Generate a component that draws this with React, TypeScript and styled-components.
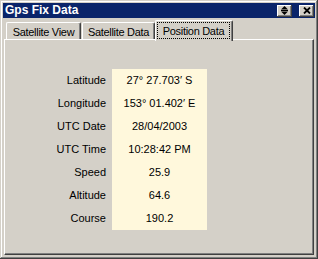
import { Fragment } from "react";
import styled, { createGlobalStyle } from "styled-components";

const GlobalStyle = createGlobalStyle`
  html, body {
    margin: 0;
    padding: 0;
    background: #d4d0c8;
  }
  body {
    font-family: "Liberation Sans", Arial, sans-serif;
    font-size: 11px;
    color: #000;
  }
`;

const Window = styled.div`
  width: 318px;
  height: 259px;
  box-sizing: border-box;
  padding: 3px;

  display: flex;
  flex-direction: column;

  background-color: #d4d0c8;
  box-shadow: inset -1px -1px #404040, inset 1px 1px #d4d0c8,
    inset -2px -2px #808080, inset 2px 2px #ffffff;
`;
const TitleBar = styled.header`
  height: 15px;
  padding: 0 1px 0 2px;

  display: flex;
  align-items: center;
  gap: 7px;

  background-color: #0a246a;
  color: #fff;

  h1 {
    flex-grow: 1;
    margin: 0;
    font-size: 12px;
    font-weight: 700;
    line-height: 15px;
  }
`;
const CaptionButton = styled.button`
  width: 15px;
  height: 12px;
  padding: 0;
  border: 0;

  display: flex;
  align-items: center;
  justify-content: center;

  background-color: #d4d0c8;
  box-shadow: inset -1px -1px #404040, inset 1px 1px #ffffff,
    inset -2px -2px #808080, inset 2px 2px #d4d0c8;
`;
const Body = styled.section`
  flex-grow: 1;
  padding: 0 1px 1px 1px;

  display: flex;
  flex-direction: column;
`;
const TabStrip = styled.nav`
  height: 21px;
  padding-left: 2px;

  display: flex;
  align-items: flex-end;
`;
const Tab = styled.div<{ $active?: boolean; $width: number; $gap?: number }>`
  position: relative;
  z-index: ${({ $active }) => ($active ? 1 : 0)};
  box-sizing: border-box;
  width: ${({ $width }) => $width}px;
  height: ${({ $active }) => ($active ? 21 : 17)}px;
  margin-right: ${({ $gap }) => $gap ?? 0}px;
  margin-bottom: ${({ $active }) => ($active ? -2 : 0)}px;
  padding: ${({ $active }) => ($active ? "1px 1px 2px" : "1px 0 0")};

  display: flex;
  align-items: ${({ $active }) => ($active ? "stretch" : "center")};
  justify-content: center;

  background-color: #d4d0c8;
  border-top: 1px solid #ffffff;
  border-left: 1px solid #ffffff;
  border-right: 1px solid #404040;
  border-radius: 2px 2px 0 0;
  box-shadow: inset -1px 0 #808080;

  font-size: 11px;
  letter-spacing: -0.3px;
  white-space: nowrap;
`;
const FocusLabel = styled.span`
  flex-grow: 1;
  margin-right: 1px;

  display: flex;
  align-items: center;
  justify-content: center;

  border: 1px dotted #000;
`;
const Panel = styled.main`
  flex-grow: 1;
  padding: 29px 0 0 35px;

  background-color: #d4d0c8;
  border-top: 1px solid #ffffff;
  border-left: 1px solid #ffffff;
  border-right: 1px solid #404040;
  border-bottom: 1px solid #404040;
  box-shadow: inset -1px -1px #808080;
`;
const DataGrid = styled.dl`
  margin: 0;

  display: grid;
  grid-template-columns: 66px 95px;
  grid-auto-rows: 23px;
  column-gap: 6px;

  dt {
    text-align: right;
    line-height: 23px;
  }
  dd {
    margin: 0;
    text-align: center;
    line-height: 23px;
    background-color: #fff8dc;
  }
`;

const fixData = [
  { label: "Latitude", value: "27° 27.703′ S" },
  { label: "Longitude", value: "153° 01.402′ E" },
  { label: "UTC Date", value: "28/04/2003" },
  { label: "UTC Time", value: "10:28:42 PM" },
  { label: "Speed", value: "25.9" },
  { label: "Altitude", value: "64.6" },
  { label: "Course", value: "190.2" },
];

const App = () => {
  return (
    <>
      <GlobalStyle />
      <Window>
        <TitleBar>
          <h1>Gps Fix Data</h1>
          <CaptionButton aria-label="Roll up">
            <svg width="7" height="9" viewBox="0 0 7 9">
              <polygon points="3.5,0 7,3.5 0,3.5" fill="#000" />
              <rect x="0" y="4" width="7" height="1" fill="#000" />
              <polygon points="0,5.5 7,5.5 3.5,9" fill="#000" />
            </svg>
          </CaptionButton>
          <CaptionButton aria-label="Close">
            <svg width="8" height="7" viewBox="0 0 8 7">
              <path d="M1 0.5 L7 6.5 M7 0.5 L1 6.5" stroke="#000" strokeWidth="1.8" />
            </svg>
          </CaptionButton>
        </TitleBar>
        <Body>
          <TabStrip>
            <Tab $width={75} $gap={1}>Satellite View</Tab>
            <Tab $width={73}>Satellite Data</Tab>
            <Tab $width={78} $active>
              <FocusLabel>Position Data</FocusLabel>
            </Tab>
          </TabStrip>
          <Panel>
            <DataGrid>
              {fixData.map((row) => (
                <Fragment key={row.label}>
                  <dt>{row.label}</dt>
                  <dd>{row.value}</dd>
                </Fragment>
              ))}
            </DataGrid>
          </Panel>
        </Body>
      </Window>
    </>
  );
};

export default App;
